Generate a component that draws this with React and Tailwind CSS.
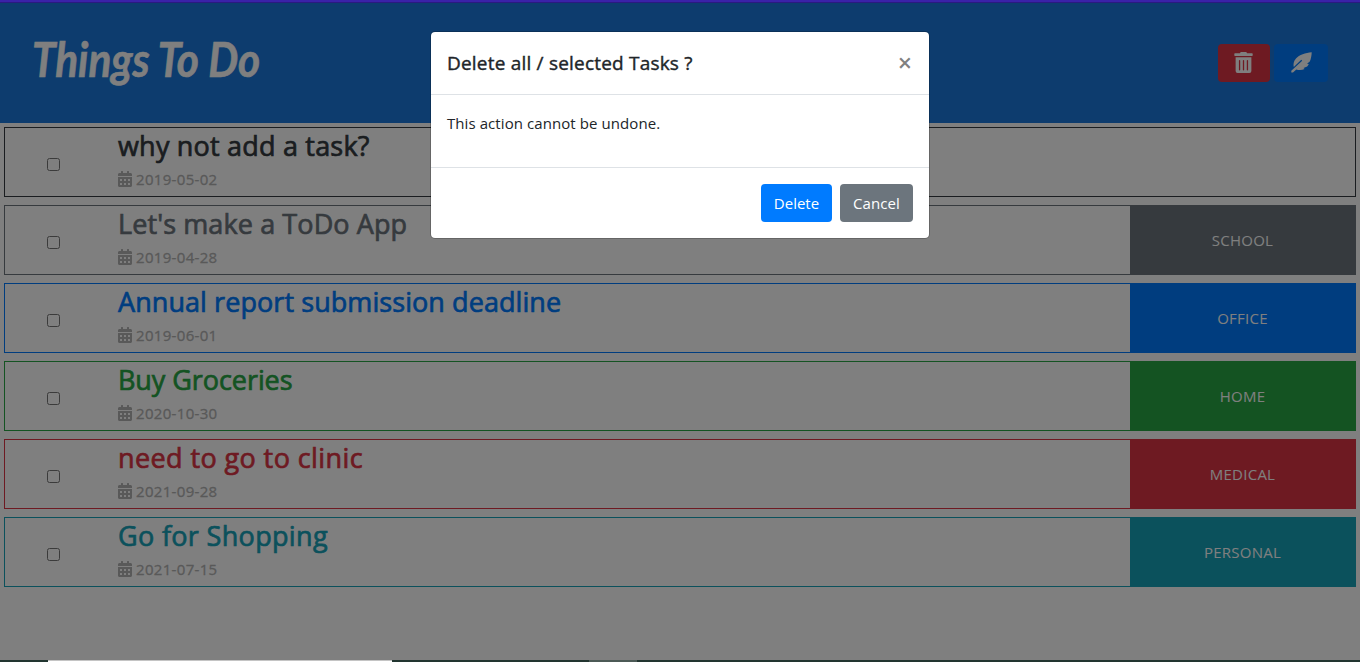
import { FaTrashAlt, FaCalendarAlt } from "react-icons/fa";

const tasks = [
  { title: "why not add a task?", date: "2019-05-02", w: "tracking-[0.2px]", border: "border-[#343a40]", text: "text-[#343a40]" },
  { title: "Let's make a ToDo App", date: "2019-04-28", w: "tracking-[0.1px]", border: "border-[#6c757d]", text: "text-[#6c757d]", bg: "bg-[#6c757d]", label: "SCHOOL" },
  { title: "Annual report submission deadline", date: "2019-06-01", w: "tracking-[0.07px]", border: "border-[#007bff]", text: "text-[#007bff]", bg: "bg-[#007bff]", label: "OFFICE" },
  { title: "Buy Groceries", date: "2020-10-30", w: "tracking-[-0.07px]", border: "border-[#28a745]", text: "text-[#28a745]", bg: "bg-[#28a745]", label: "HOME" },
  { title: "need to go to clinic", date: "2021-09-28", w: "tracking-[0.4px]", border: "border-[#dc3545]", text: "text-[#dc3545]", bg: "bg-[#dc3545]", label: "MEDICAL" },
  { title: "Go for Shopping", date: "2021-07-15", w: "tracking-[0.33px]", border: "border-[#17a2b8]", text: "text-[#17a2b8]", bg: "bg-[#17a2b8]", label: "PERSONAL" },
];

function Feather() {
  return (
    <svg viewBox="0 0 21 21" className="size-[21px]" fill="currentColor">
      <path d="M20.7 0.2C14.5 0.7 8.2 2.8 5 6.4C2.6 9.2 2.1 12 2.8 15L10.3 7.8L11.2 8.7L0.3 18.7V20.6H2L5.3 17.5C8 18.4 11.2 18.3 13.6 17L12.5 16.1L16.2 14.6C16.9 13.8 17.4 13 17.8 12L16 11.7L18.8 9.6C20 6.7 20.6 3.4 20.7 0.2Z" />
    </svg>
  );
}

function Task({ task }) {
  return (
    <li className={`flex h-[70px] border ${task.border}`}>
      <div className="flex w-[112px] shrink-0 pl-[42px] pt-[30px]">
        <input type="checkbox" className="size-[13px] appearance-none rounded-[2.5px] border border-[#767676] bg-white" />
      </div>
      <div className="flex min-w-0 grow flex-col">
        <h2 className={`mt-px h-[34px] whitespace-nowrap pl-px text-[27px] font-normal leading-[34px] [-webkit-text-stroke:0.7px_currentColor] ${task.w} ${task.text}`}>{task.title}</h2>
        <p className="mt-[4px] flex h-6 items-center text-[15px] leading-6 tracking-[0.32px] text-[#b2b2b2] [-webkit-text-stroke:0.3px_currentColor]">
          <FaCalendarAlt className="ml-[0.5px] mr-[4.5px] h-4 w-[14px] [-webkit-text-stroke:0]" />
          {task.date}
        </p>
      </div>
      {task.label && (
        <div className={`flex w-[225px] shrink-0 items-center justify-center text-[15px] tracking-[0.25px] text-white ${task.bg}`}>{task.label}</div>
      )}
    </li>
  );
}

export default function App() {
  return (
    <div className="relative flex h-[662px] w-[1360px] flex-col overflow-hidden bg-white font-['Open_Sans','Noto_Sans',sans-serif]">
      <div className="h-[3px] shrink-0 border-b border-[#2a1a80] bg-[#3a22a8]" />
      <div className="relative flex grow flex-col">
        <header className="flex h-[120px] shrink-0 items-center justify-between bg-[#1a78dc] pl-[32px] pr-8">
          <h1 className="origin-left scale-x-[0.9] whitespace-nowrap pb-2 font-['Lato',sans-serif] text-[47px] font-bold italic leading-[56px] text-white [-webkit-text-stroke:0.6px_currentColor]">Things To Do</h1>
          <div className="flex gap-1">
            <button className="flex h-[38px] w-[52px] items-center justify-center rounded bg-[#dc3545] pb-px pr-px text-white"><FaTrashAlt className="size-[21px]" /></button>
            <button className="flex h-[38px] w-[54px] items-center justify-center rounded bg-[#007bff] pb-px text-white"><Feather /></button>
          </div>
        </header>
        <ul className="flex flex-col gap-2 px-1 pt-1">
          {tasks.map((t) => <Task key={t.title} task={t} />)}
        </ul>
        <div className="absolute inset-0 bg-black/50" />
      </div>
      <div className="flex h-[2px] shrink-0 bg-[#223530]">
        <div className="ml-12 w-[344px] border-t border-[#c4c4c4] bg-white" />
        <div className="ml-[197px] w-12 bg-[#4c5a56]" />
      </div>
      <div role="dialog" className="absolute left-[430px] top-[31px] flex h-[208px] w-[500px] flex-col rounded-[5px] border border-black/20 bg-white bg-clip-padding text-[#212529]">
        <div className="flex h-[63px] items-center justify-between border-b border-[#dee2e6] px-4">
          <h5 className="text-[19px] tracking-[0.2px] [-webkit-text-stroke:0.4px_currentColor]">Delete all / selected Tasks ?</h5>
          <button className="mr-[1px] pb-px text-[25px] font-semibold leading-none text-black/50">×</button>
        </div>
        <div className="h-[73px] border-b border-[#dee2e6] px-4 pt-4 text-[15px] leading-6 tracking-[0.08px]">This action cannot be undone.</div>
        <div className="flex justify-end gap-2 p-4">
          <button className="h-[38px] w-[71px] rounded bg-[#007bff] text-[15px] text-white">Delete</button>
          <button className="h-[38px] w-[73px] rounded bg-[#6c757d] text-[15px] tracking-[0.1px] text-white">Cancel</button>
        </div>
      </div>
    </div>
  );
}
